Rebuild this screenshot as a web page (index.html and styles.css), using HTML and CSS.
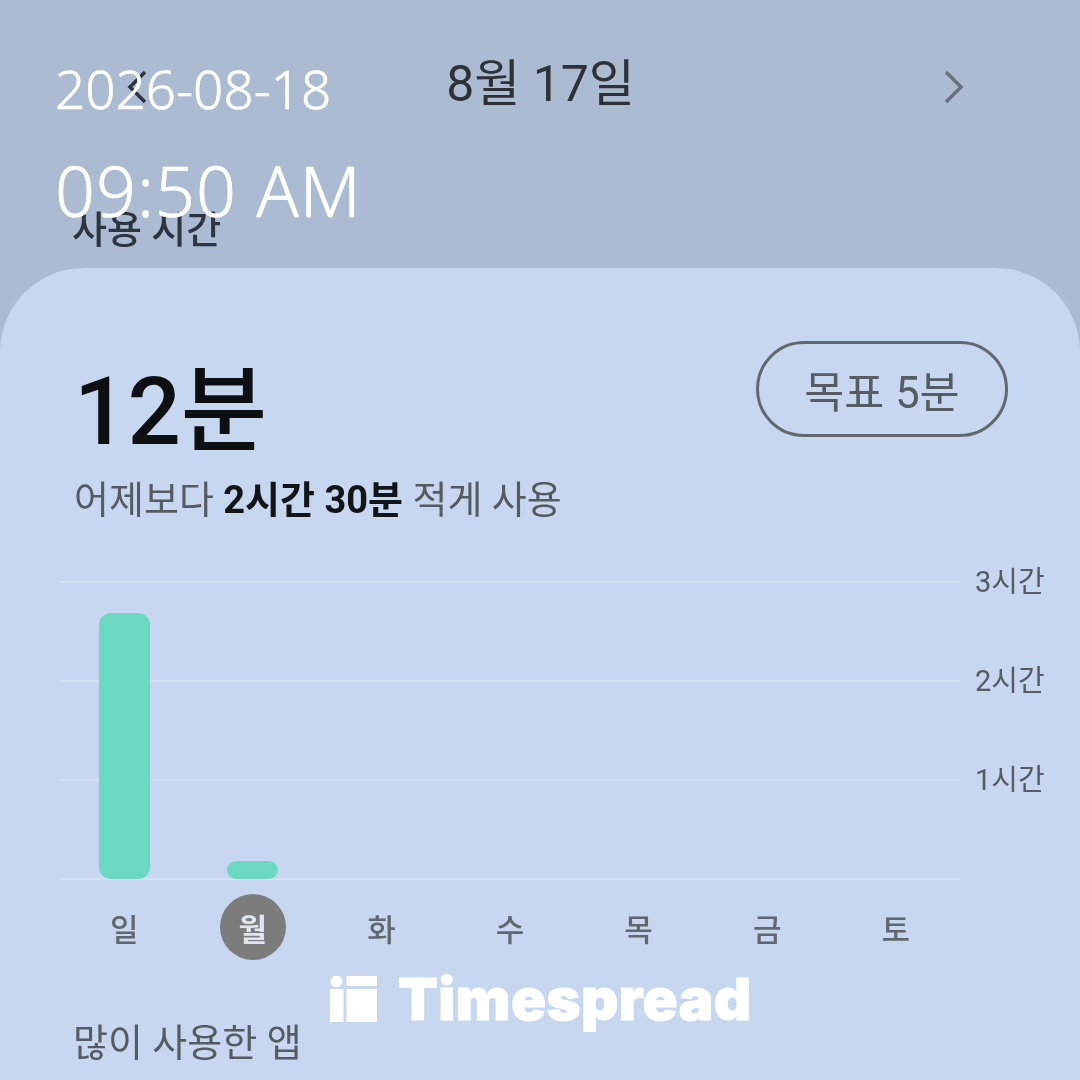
FILE: index.html
```html
<!DOCTYPE html>
<html lang="ko">
<head>
<meta charset="utf-8">
<title>사용 시간</title>
<link rel="stylesheet" href="styles.css">
</head>
<body>
<div class="screen">
  <header class="top">
    <div class="nav">
      <svg class="chev" viewBox="0 0 24 36"><path d="M20 3 5 18l15 15"/></svg>
      <h1 class="date">8월 17일</h1>
      <svg class="chev chev-next" viewBox="0 0 24 36"><path d="M4 3l15 15L4 33"/></svg>
    </div>
    <h2 class="section">사용 시간</h2>
  </header>
  <main class="card">
    <div class="summary">
      <div class="total">12분</div>
      <div class="goal">목표 5분</div>
    </div>
    <p class="compare">어제보다 <b>2시간 30분</b> 적게 사용</p>
    <div class="chart">
      <div class="grid">
        <div class="row"><span class="line"></span><span class="tick">3시간</span></div>
        <div class="row"><span class="line"></span><span class="tick">2시간</span></div>
        <div class="row"><span class="line"></span><span class="tick">1시간</span></div>
        <div class="row"><span class="line"></span></div>
      </div>
      <div class="bars">
        <div class="slot"><span class="bar" style="height:266px"></span></div>
        <div class="slot"><span class="bar" style="height:18px"></span></div>
        <div class="slot"></div><div class="slot"></div><div class="slot"></div><div class="slot"></div><div class="slot"></div>
      </div>
    </div>
    <div class="days">
      <span class="day">일</span>
      <span class="day"><span class="today">월</span></span>
      <span class="day">화</span>
      <span class="day">수</span>
      <span class="day">목</span>
      <span class="day">금</span>
      <span class="day">토</span>
    </div>
    <h2 class="apps">많이 사용한 앱</h2>
  </main>
  <div class="stamp">
    <div class="stamp-date">2026-08-18</div>
    <div class="stamp-time">09:50 AM</div>
  </div>
  <div class="brand">
    <svg class="brand-mark" viewBox="0 0 47 46"><circle cx="6.500" cy="5.500" r="6"/><rect x="0" y="13" width="13.500" height="33"/><rect x="16.500" y="0" width="30.500" height="10"/><rect x="16.500" y="13" width="30.500" height="33"/></svg>
    <span class="brand-name">Timespread</span>
  </div>
</div>
</body>
</html>
```
FILE: styles.css
```css
* { box-sizing: border-box; margin: 0; padding: 0; }
html, body { width: 1080px; height: 1080px; overflow: hidden; }
body { font-family: "Roboto", "Noto Sans CJK KR", sans-serif; background: #abbbd2; }
.screen { position: relative; width: 1080px; height: 1080px; display: flex; flex-direction: column; overflow: hidden; }
.top { height: 268px; flex: none; padding: 56px 0 0 72px; color: #2b323c; filter: blur(0.6px); }
.nav { display: flex; align-items: center; justify-content: space-between; height: 56px; padding: 0 114px 0 53px; }
.date { font-size: 50px; font-weight: 400; line-height: 56px; color: #2e3238; margin-right: 10px; }
.chev { width: 24px; height: 36px; margin-top: 6px; fill: none; stroke: #2f3540; stroke-width: 3.500; }
.chev-next { stroke: #69717d; }
.section { margin-top: 98px; font-size: 38px; font-weight: 500; line-height: 40px; color: #2e3540; }
.card { flex: 1; background: #c7d7f0; border-radius: 84px 84px 0 0; padding: 84px 0 0; filter: blur(0.6px); }
.summary { display: flex; justify-content: space-between; align-items: flex-start; padding: 0 72px 0 74px; }
.total { font-size: 94px; font-weight: 500; line-height: 116px; height: 116px; padding-top: 2px; color: #0d0f12; }
.goal { width: 252px; height: 96px; margin-top: -11px; border: 3px solid #62686f; border-radius: 48px; display: flex; align-items: center; justify-content: center; font-size: 43.500px; color: #565c64; }
.compare { margin: 7px 0 0 74px; font-size: 38px; line-height: 50px; color: #555b63; }
.compare b { font-weight: 700; color: #111418; }
.chart { position: relative; margin: 56px 0 0 60px; height: 298px; }
.grid { display: flex; flex-direction: column; }
.row { position: relative; height: 99px; display: flex; }
.row:last-child { height: 2px; }
.line { width: 900px; height: 2px; background: #d3e0f4; }
.tick { position: absolute; left: 915px; top: -16px; font-size: 29px; line-height: 34px; color: #565c64; }
.bars { position: absolute; left: 0; top: 0; width: 900px; height: 298px; display: flex; align-items: flex-end; }
.slot { flex: 1; display: flex; justify-content: center; }
.bar { width: 51px; background: #6bd9c1; border-radius: 12px; }
.days { display: flex; width: 900px; margin: 15px 0 0 60px; height: 66px; }
.day { flex: 1; display: flex; align-items: center; justify-content: center; font-size: 31px; font-weight: 500; color: #61676f; }
.today { width: 66px; height: 66px; border-radius: 50%; background: #7c7c7c; color: #dfe6f2; display: flex; align-items: center; justify-content: center; font-weight: 700; }
.apps { margin: 61px 0 0 73px; font-size: 38px; font-weight: 400; line-height: 44px; color: #555b63; }
.stamp { position: absolute; left: 55px; top: 55px; color: #fff; font-family: "Noto Sans", sans-serif; font-weight: 300; -webkit-text-stroke: 0.6px #fff; }
.stamp-date { font-size: 53px; line-height: 68px; }
.stamp-time { margin-top: 27px; font-size: 70px; line-height: 80px; letter-spacing: 1px; }
.brand { position: absolute; left: 330px; top: 976px; display: flex; align-items: flex-start; gap: 21px; color: #fff; }
.brand-mark { width: 47px; height: 46px; fill: #fff; }
.brand-name { font-family: "Inter", sans-serif; font-weight: 900; font-size: 58px; line-height: 46px; letter-spacing: 0.400px; -webkit-text-stroke: 1px #fff; }
```
